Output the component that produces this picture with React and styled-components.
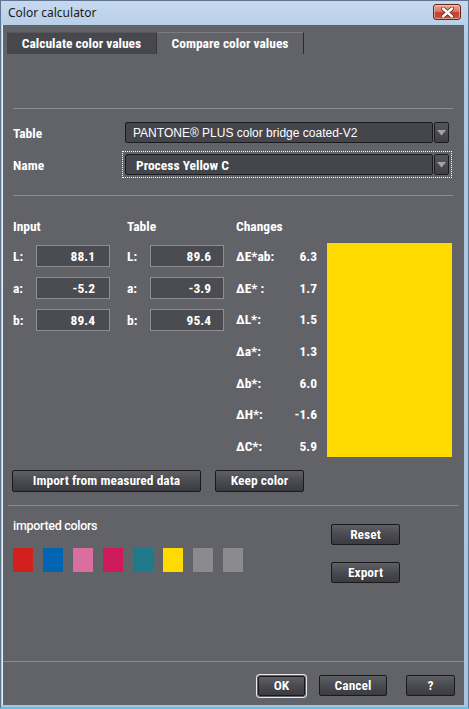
import React from "react";
import styled, { createGlobalStyle } from "styled-components";

const NARROW = `"Liberation Sans Narrow", "Roboto Condensed", "Liberation Sans", Arial, sans-serif`;

const Global = createGlobalStyle`
  html, body { margin: 0; padding: 0; background: #ffffff; }
  body { font-family: ${NARROW}; }
  * { box-sizing: border-box; }
`;

const Window = styled.div`
  width: 469px;
  height: 709px;
  display: flex;
  flex-direction: column;
  background: linear-gradient(#c6d9ee, #afc9e5 40px, #a9c4e2);
  border: 1px solid #5d7590;
  border-bottom: 2px solid #5cc4e4;
`;

const TitleBar = styled.div`
  height: 24px;
  display: flex;
  align-items: center;
  justify-content: space-between;
  padding: 0 7px 0 7px;
`;

const Title = styled.span`
  font-family: "Noto Sans", "Open Sans", sans-serif;
  font-size: 12px;
  color: #1a1a1a;
  margin-top: -2px;
`;

const CloseBtn = styled.div`
  width: 28px;
  height: 16px;
  margin-top: -2px;
  border: 1px solid #6a2418;
  border-radius: 3px;
  background: linear-gradient(#eaa895, #d57a64 45%, #c2412b 55%, #c9563e);
  display: flex;
  align-items: center;
  justify-content: center;
  box-shadow: inset 0 0 0 1px rgba(255, 220, 210, 0.5);
`;

const Body = styled.div`
  flex: 1;
  margin: 0 4px 2px 1px;
  background: #626269;
  display: flex;
  flex-direction: column;
  border-left: 1px solid #e8f0f8;
  color: #ffffff;
`;

const TabStrip = styled.div`
  display: flex;
  margin-top: 7px;
  padding-left: 4px;
`;

const Tab = styled.div`
  height: 22px;
  width: ${(p) => p.$w}px;
  display: flex;
  align-items: center;
  justify-content: center;
  padding-bottom: 1px;
  font-family: ${NARROW};
  font-weight: bold;
  font-size: 13.5px;
  color: #ffffff;
  background: ${(p) => (p.$active ? "#47474e" : "#626269")};
  border-top: 1px solid ${(p) => (p.$active ? "#56565c" : "#7a7a80")};
  border-right: 1px solid ${(p) => (p.$active ? "#3a3a40" : "#2a2a2e")};
`;

const Separator = styled.div`
  height: 1px;
  background: #8b8b91;
  margin: ${(p) => p.$m};
`;

const FieldRow = styled.div`
  display: flex;
  align-items: center;
  padding-left: 10px;
  height: 21px;
  margin-top: ${(p) => p.$mt}px;
`;

const FieldLabel = styled.div`
  width: 112px;
  font-family: ${NARROW};
  font-weight: bold;
  font-size: 13.5px;
`;

const SelectWrap = styled.div`
  position: relative;
  display: flex;
  width: 324px;
  height: ${(p) => p.$h}px;
  &::after {
    content: "";
    display: ${(p) => (p.$focus ? "block" : "none")};
    position: absolute;
    left: -3px;
    top: -3px;
    right: -3px;
    bottom: -3px;
    border: 1px dotted #ffffff;
    pointer-events: none;
  }
`;

const SelectField = styled.div`
  flex: 1;
  background: #45454c;
  border: 1px solid #1b1b1f;
  border-radius: 2px;
  display: flex;
  align-items: center;
  padding-left: ${(p) => (p.$bold ? 10 : 7)}px;
  font-family: ${(p) => (p.$bold ? NARROW : `"Liberation Sans", Arial, sans-serif`)};
  font-weight: ${(p) => (p.$bold ? "bold" : "normal")};
  font-size: ${(p) => (p.$bold ? 13.5 : 12)}px;
  color: #ffffff;
`;

const SelectArrow = styled.div`
  width: 15px;
  margin-left: 1px;
  background: linear-gradient(#55555c, #404046);
  border: 1px solid #1b1b1f;
  border-radius: 2px;
  display: flex;
  align-items: center;
  justify-content: center;
`;

const DataArea = styled.div`
  display: flex;
  padding-left: 10px;
  margin-top: 22px;
`;

const Column = styled.div`
  width: ${(p) => p.$w}px;
  display: flex;
  flex-direction: column;
`;

const ColHeader = styled.div`
  height: 16px;
  line-height: 16px;
  font-family: ${NARROW};
  font-weight: bold;
  font-size: 13.5px;
  margin-bottom: 6px;
`;

const ValueRow = styled.div`
  height: 32px;
  display: flex;
  align-items: center;
`;

const RowLabel = styled.div`
  width: 23px;
  font-family: ${NARROW};
  font-weight: bold;
  font-size: 13.5px;
`;

const ValueBox = styled.div`
  width: 74px;
  height: 22px;
  background: #4b4b52;
  border: 1px solid #8d8d93;
  display: flex;
  align-items: center;
  justify-content: flex-end;
  padding-right: ${(p) => p.$pr}px;
  font-family: ${NARROW};
  font-weight: bold;
  font-size: 13.5px;
`;

const ChangesBody = styled.div`
  display: flex;
`;

const ChangesList = styled.div`
  width: 81px;
  display: flex;
  flex-direction: column;
`;

const ChangeRow = styled.div`
  height: 31.7px;
  display: flex;
  align-items: center;
  justify-content: space-between;
  font-family: ${NARROW};
  font-weight: bold;
  font-size: 13.5px;
`;

const ColorPreview = styled.div`
  width: 125px;
  height: 214px;
  margin-left: 10px;
  margin-top: 3px;
  background: #ffda00;
`;

const ActionRow = styled.div`
  display: flex;
  gap: 14px;
  padding-left: 9px;
  margin-top: 8px;
`;

const Button = styled.div`
  width: ${(p) => p.$w}px;
  height: ${(p) => p.$h || 21}px;
  display: flex;
  align-items: center;
  justify-content: center;
  padding-bottom: 1px;
  background: linear-gradient(#5f5f66, #4a4a51 50%, #3b3b41);
  border: 1px solid #1a1a1d;
  border-radius: 2px;
  font-family: ${NARROW};
  font-weight: bold;
  font-size: 13.5px;
  color: #ffffff;
  text-shadow: 0 0 1px rgba(0, 0, 0, 0.6);
  box-shadow: ${(p) => (p.$default ? "0 0 0 1px #62626a, 0 0 0 2px #e8e8e8" : "none")};
`;

const ImportedSection = styled.div`
  display: flex;
  padding-left: 10px;
`;

const ImportedLeft = styled.div`
  width: 318px;
  display: flex;
  flex-direction: column;
`;

const SectionLabel = styled.div`
  margin-top: 12px;
  height: 16px;
  line-height: 16px;
  font-family: "Roboto", ${NARROW};
  font-weight: 500;
  font-size: 12.5px;
  letter-spacing: -0.3px;
`;

const Swatches = styled.div`
  display: flex;
  gap: 10px;
  margin-top: 14px;
`;

const Swatch = styled.div`
  width: 20px;
  height: 24px;
  background: ${(p) => p.$c};
`;

const ImportedRight = styled.div`
  display: flex;
  flex-direction: column;
  gap: 17px;
  margin-top: 18px;
`;

const Footer = styled.div`
  margin-top: auto;
  display: flex;
  flex-direction: column;
`;

const FooterButtons = styled.div`
  display: flex;
  align-items: center;
  padding: 13px 0 9px 255px;
`;

const Spacer = styled.div`
  width: ${(p) => p.$w}px;
`;

const Arrow = () => (
  <svg width="9" height="6" viewBox="0 0 9 6">
    <path d="M0 0 H9 L4.5 5.5 Z" fill="#a3a3a8" />
  </svg>
);

const CloseX = () => (
  <svg width="13" height="11" viewBox="0 0 13 11">
    <path d="M2 1.5 L11 9.5 M11 1.5 L2 9.5" stroke="#6b2a20" strokeWidth="4" strokeLinecap="round" />
    <path d="M2 1.5 L11 9.5 M11 1.5 L2 9.5" stroke="#ffffff" strokeWidth="2.4" strokeLinecap="round" />
  </svg>
);

const inputRows = [
  ["L:", "88.1"],
  ["a:", "-5.2"],
  ["b:", "89.4"],
];
const tableRows = [
  ["L:", "89.6"],
  ["a:", "-3.9"],
  ["b:", "95.4"],
];
const changes = [
  ["ΔE*ab:", "6.3"],
  ["ΔE* :", "1.7"],
  ["ΔL*:", "1.5"],
  ["Δa*:", "1.3"],
  ["Δb*:", "6.0"],
  ["ΔH*:", "-1.6"],
  ["ΔC*:", "5.9"],
];
const imported = ["#d41f1f", "#0066b3", "#d96fa0", "#cf1a5a", "#1e7a8a", "#ffda00", "#8b8b8d", "#8b8b8d"];

export default function App() {
  return (
    <>
      <Global />
      <Window>
        <TitleBar>
          <Title>Color calculator</Title>
          <CloseBtn>
            <CloseX />
          </CloseBtn>
        </TitleBar>
        <Body>
          <TabStrip>
            <Tab $active $w={150}>Calculate color values</Tab>
            <Tab $w={147}>Compare color values</Tab>
          </TabStrip>

          <Separator $m="54px 11px 0 10px" />

          <FieldRow $mt={13}>
            <FieldLabel>Table</FieldLabel>
            <SelectWrap $h={21}>
              <SelectField>PANTONE® PLUS color bridge coated-V2</SelectField>
              <SelectArrow>
                <Arrow />
              </SelectArrow>
            </SelectWrap>
          </FieldRow>
          <FieldRow $mt={11}>
            <FieldLabel>Name</FieldLabel>
            <SelectWrap $h={21} $focus>
              <SelectField $bold>Process Yellow C</SelectField>
              <SelectArrow>
                <Arrow />
              </SelectArrow>
            </SelectWrap>
          </FieldRow>

          <Separator $m="20px 11px 0 10px" />

          <DataArea>
            <Column $w={114}>
              <ColHeader>Input</ColHeader>
              {inputRows.map(([l, v]) => (
                <ValueRow key={l}>
                  <RowLabel>{l}</RowLabel>
                  <ValueBox $pr={14}>{v}</ValueBox>
                </ValueRow>
              ))}
            </Column>
            <Column $w={109}>
              <ColHeader>Table</ColHeader>
              {tableRows.map(([l, v]) => (
                <ValueRow key={l}>
                  <RowLabel>{l}</RowLabel>
                  <ValueBox $pr={12}>{v}</ValueBox>
                </ValueRow>
              ))}
            </Column>
            <Column $w={220}>
              <ColHeader>Changes</ColHeader>
              <ChangesBody>
                <ChangesList>
                  {changes.map(([l, v]) => (
                    <ChangeRow key={l}>
                      <span>{l}</span>
                      <span>{v}</span>
                    </ChangeRow>
                  ))}
                </ChangesList>
                <ColorPreview />
              </ChangesBody>
            </Column>
          </DataArea>

          <ActionRow>
            <Button $w={189} $h={22}>Import from measured data</Button>
            <Button $w={89} $h={22}>Keep color</Button>
          </ActionRow>

          <Separator $m="13px 6px 0 5px" />

          <ImportedSection>
            <ImportedLeft>
              <SectionLabel>imported colors</SectionLabel>
              <Swatches>
                {imported.map((c, i) => (
                  <Swatch key={i} $c={c} />
                ))}
              </Swatches>
            </ImportedLeft>
            <ImportedRight>
              <Button $w={69}>Reset</Button>
              <Button $w={69}>Export</Button>
            </ImportedRight>
          </ImportedSection>

          <Footer>
            <Separator $m="0" />
            <FooterButtons>
              <Button $w={47} $h={20} $default>OK</Button>
              <Spacer $w={14} />
              <Button $w={68}>Cancel</Button>
              <Spacer $w={19} />
              <Button $w={49}>?</Button>
            </FooterButtons>
          </Footer>
        </Body>
      </Window>
    </>
  );
}
